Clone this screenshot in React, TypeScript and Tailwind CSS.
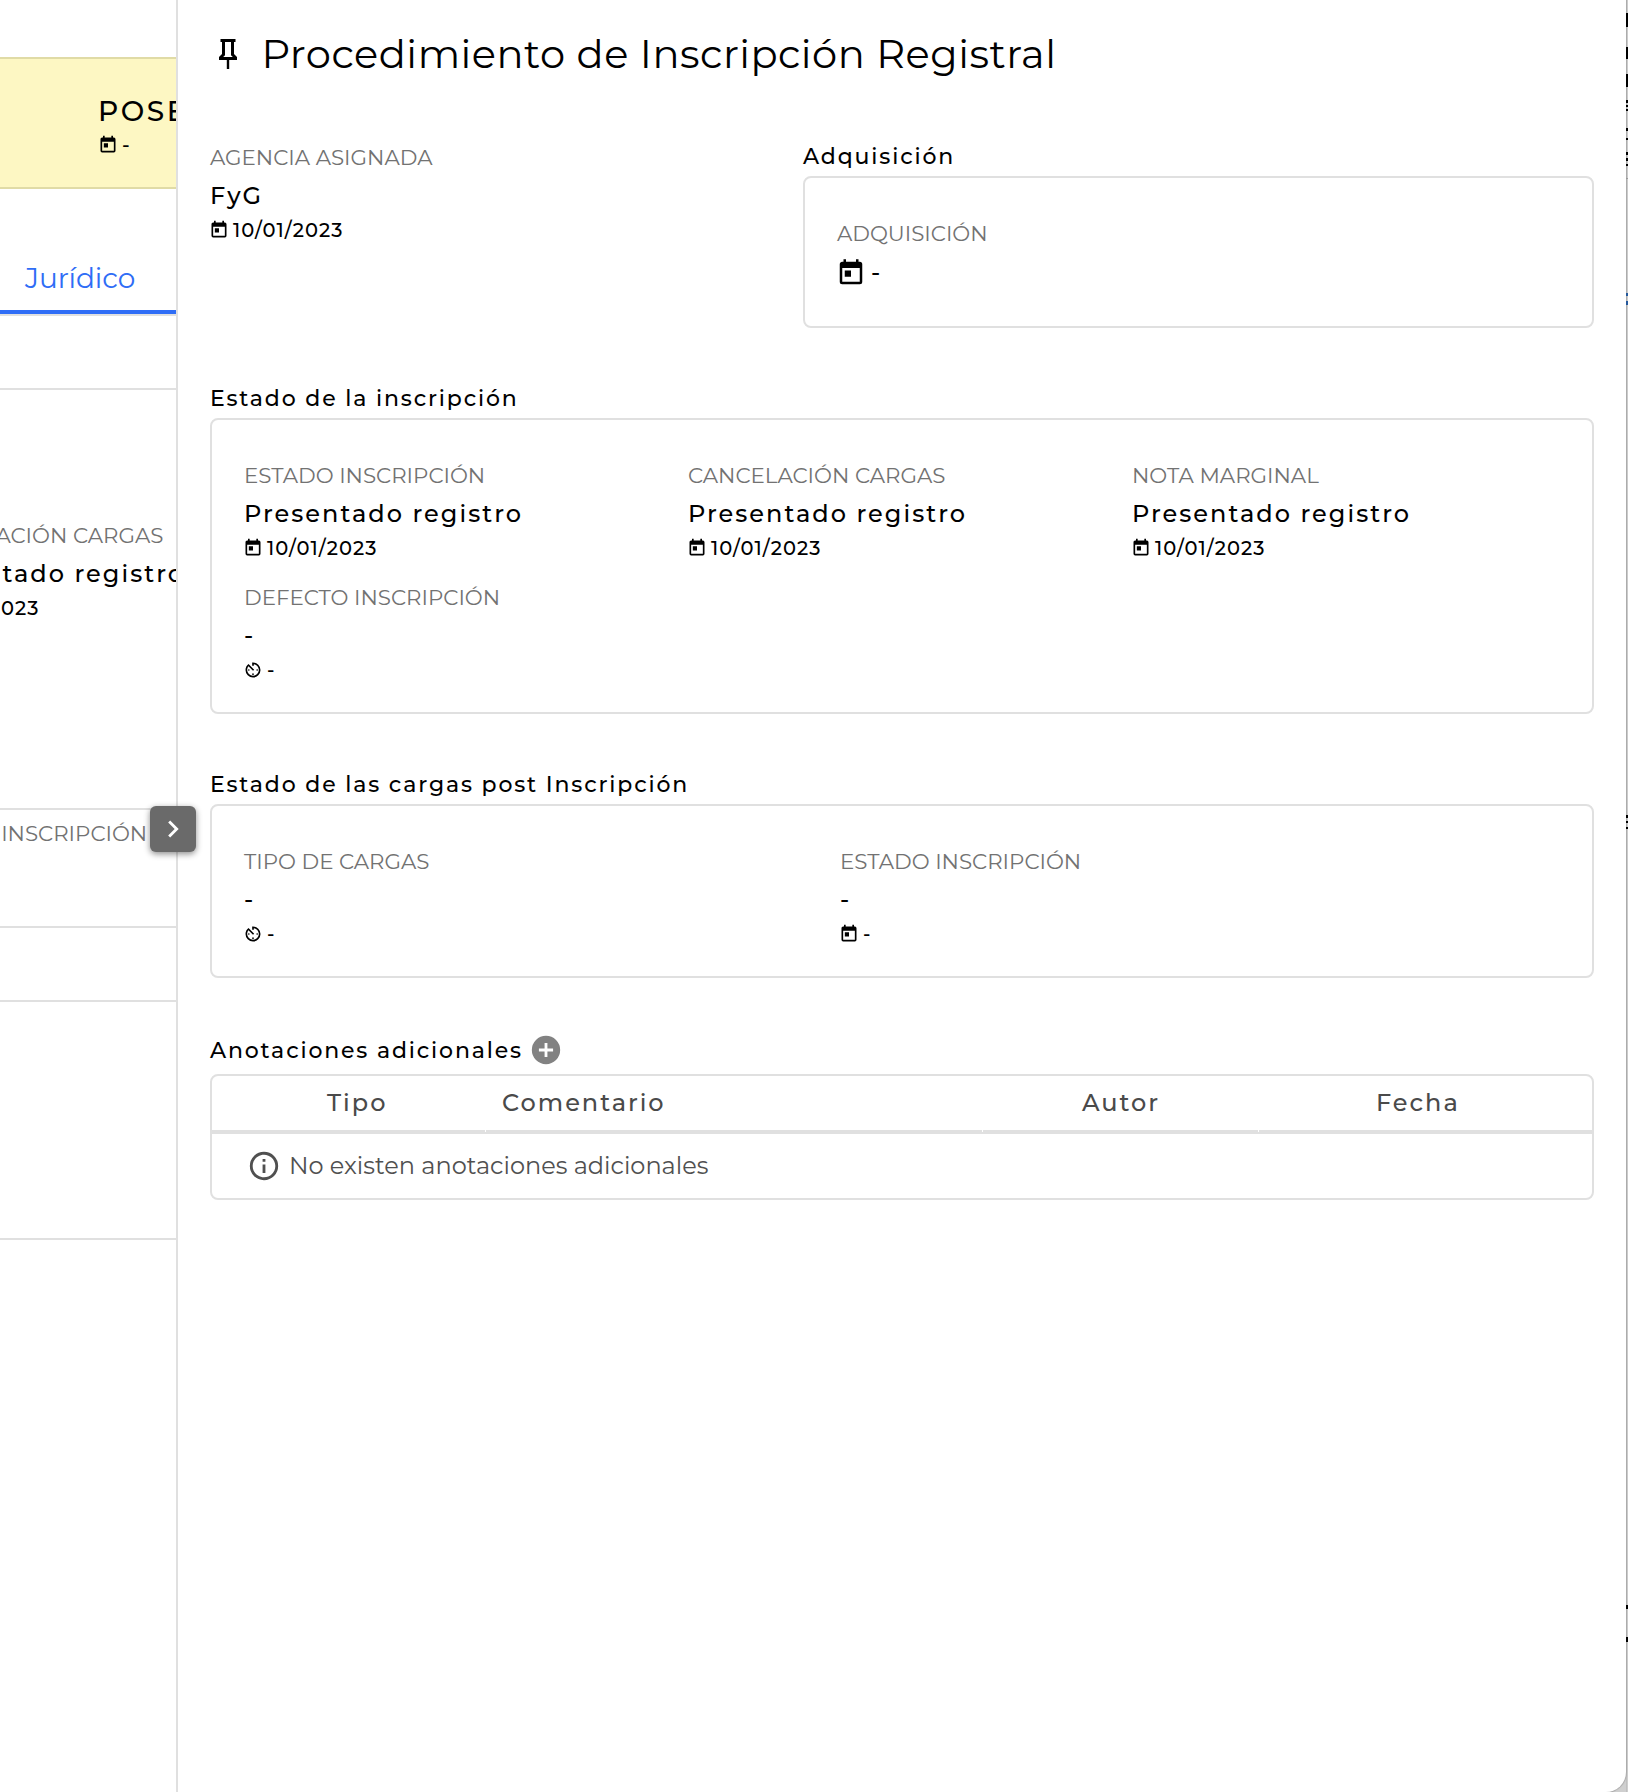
import type { ReactNode } from "react";

const ICONS = {
  calendar:
    "M7,10H12V15H7M19,19H5V8H19M19,3H18V1H16V3H8V1H6V3H5C3.89,3 3,3.9 3,5V19A2,2 0 0,0 5,21H19A2,2 0 0,0 21,19V5A2,2 0 0,0 19,3Z",
  timer:
    "M11,17A1,1 0 0,0 12,18A1,1 0 0,0 13,17A1,1 0 0,0 12,16A1,1 0 0,0 11,17M11,3V7H13V5.08C16.39,5.57 19,8.47 19,12A7,7 0 0,1 12,19A7,7 0 0,1 5,12C5,10.32 5.59,8.78 6.58,7.58L12,13L13.41,11.59L6.61,4.79V4.81C4.42,6.45 3,9.05 3,12A9,9 0 0,0 12,21A9,9 0 0,0 21,12A9,9 0 0,0 12,3M18,12A1,1 0 0,0 17,11A1,1 0 0,0 16,12A1,1 0 0,0 17,13A1,1 0 0,0 18,12M6,12A1,1 0 0,0 7,13A1,1 0 0,0 8,12A1,1 0 0,0 7,11A1,1 0 0,0 6,12Z",
  pin: "M16,12V4H17V2H7V4H8V12L6,14V16H11.2V22H12.8V16H18V14L16,12M8.8,14L10,12.8V4H14V12.8L15.2,14H8.8Z",
  plus: "M17,13H13V17H11V13H7V11H11V7H13V11H17M12,2A10,10 0 0,0 2,12A10,10 0 0,0 12,22A10,10 0 0,0 22,12A10,10 0 0,0 12,2Z",
  info: "M11,9H13V7H11M12,20C7.59,20 4,16.41 4,12C4,7.59 7.59,4 12,4C16.41,4 20,7.59 20,12C20,16.41 16.41,20 12,20M12,2A10,10 0 0,0 2,12A10,10 0 0,0 12,22A10,10 0 0,0 22,12A10,10 0 0,0 12,2M11,17H13V11H11V17Z",
  chevron: "M8.59,16.58L13.17,12L8.59,7.41L10,6L16,12L10,18L8.59,16.58Z",
};

type IconName = keyof typeof ICONS;

function Icon({ name, className }: { name: IconName; className: string }) {
  return (
    <svg viewBox="0 0 24 24" fill="currentColor" aria-hidden="true" className={`shrink-0 ${className}`}>
      <path d={ICONS[name]} />
    </svg>
  );
}

function Label({ children }: { children: ReactNode }) {
  return <div className="text-[21.35px] leading-8 whitespace-nowrap text-[#727272]">{children}</div>;
}

type FieldProps = {
  label: string;
  value: string;
  date: string;
  icon?: IconName;
  className?: string;
};

function Field({ label, value, date, icon = "calendar", className = "" }: FieldProps) {
  return (
    <div className={className}>
      <Label>{label}</Label>
      <div className="mt-[5px] text-2xl leading-9 font-medium tracking-[0.085em] whitespace-nowrap text-black">
        {value}
      </div>
      <div className="mt-1 -ml-px flex h-6 items-center gap-1 text-[19.5px] leading-6 font-medium tracking-[1.05px]">
        <Icon name={icon} className="size-5" />
        <span>{date}</span>
      </div>
    </div>
  );
}

function Heading({ children }: { children: ReactNode }) {
  return (
    <h2 className="-mb-[2px] text-[22px] leading-[34px] font-medium tracking-[1.85px] whitespace-nowrap">
      {children}
    </h2>
  );
}

function Background() {
  return (
    <aside className="flex w-[178px] shrink-0 flex-col overflow-hidden border-r-2 border-[#e0e0e0] whitespace-nowrap">
      <div className="h-[57px] shrink-0" />
      <div className="h-[132px] shrink-0 border-y-2 border-[#e0dba6] bg-[#fdf7c3] pt-[34px] pl-[98px]">
        <div className="text-[28px] leading-9 font-medium tracking-[0.0893em]">POSESIÓN</div>
        <div className="mt-1 flex h-6 items-center gap-1 text-xl font-medium">
          <Icon name="calendar" className="size-5" />
          <span>-</span>
        </div>
      </div>
      <div className="h-[125px] shrink-0 border-b-4 border-[#2f6df6] pt-[71px] pl-[25px] text-[28px] leading-9 tracking-[-0.1px] text-[#2f6df6]">
        Jurídico
      </div>
      <div className="h-[76px] shrink-0 border-y-2 border-[#e0e0e0]" />
      <div className="h-[420px] shrink-0 border-b-2 border-[#e0e0e0] pt-[129px]">
        <Field className="-ml-[94px]" label="CANCELACIÓN CARGAS" value="Presentado registro" date="10/01/2023" />
      </div>
      <div className="h-[118px] shrink-0 border-b-2 border-[#e0e0e0] pt-[7px]">
        <div className="-ml-[94px]">
          <Label>ESTADO INSCRIPCIÓN</Label>
        </div>
      </div>
      <div className="h-[74px] shrink-0 border-b-2 border-[#e0e0e0]" />
      <div className="h-[238px] shrink-0 border-b-2 border-[#e0e0e0]" />
    </aside>
  );
}

const card = "rounded-lg border-2 border-[#e0e0e0]";

function Annotations() {
  const head = "flex h-[56px] items-center border-b-2 border-[#e0e0e0]";
  return (
    <div className={`mt-2 overflow-hidden text-[#4a4a4a] ${card}`}>
      <div className="grid grid-cols-[273px_496px_275px_1fr] gap-px text-2xl font-medium tracking-[0.083em]">
        <div className={`pl-[115px] ${head}`}>Tipo</div>
        <div className={`pl-4 ${head}`}>Comentario</div>
        <div className={`pl-[99px] ${head}`}>Autor</div>
        <div className={`pl-[117px] ${head}`}>Fecha</div>
      </div>
      <div className="flex h-[66px] items-center gap-2 border-t-2 border-[#e0e0e0] pl-[35px] text-2xl text-[#505050]">
        <Icon name="info" className="size-[34px]" />
        <span>No existen anotaciones adicionales</span>
      </div>
    </div>
  );
}

/** Marks of the window behind, visible past the panel's right edge. */
const MARKS = [
  { key: "a", className: "mt-[13px] h-[14px] bg-black" },
  { key: "b", className: "mt-[20px] h-[12px] bg-black" },
  { key: "c", className: "mt-[15px] h-[13px] bg-black" },
  { key: "d", className: "mt-[13px] h-[3px] bg-black" },
  { key: "e", className: "mt-[2px] h-[2px] bg-black" },
  { key: "f", className: "mt-[2px] h-[2px] bg-black" },
  { key: "g", className: "mt-[17px] h-[3px] bg-black" },
  { key: "h", className: "mt-[7px] h-[2px] bg-black" },
  { key: "i", className: "mt-[12px] h-[3px] bg-black" },
  { key: "j", className: "mt-[3px] h-[3px] bg-black" },
  { key: "k", className: "mt-[3px] h-[2px] bg-black" },
  { key: "l", className: "mt-[12px] h-px bg-[#999999]" },
  { key: "m", className: "mt-[114px] h-[3px] bg-[#24589c]" },
  { key: "n", className: "mt-[5px] h-[4px] bg-[#24589c]" },
  { key: "o", className: "mt-[510px] h-[3px] bg-black" },
  { key: "p", className: "mt-[3px] h-[2px] bg-black" },
  { key: "q", className: "mt-[4px] h-[2px] bg-black" },
  { key: "r", className: "mt-[776px] h-[4px] bg-black" },
  { key: "s", className: "mt-[28px] h-[5px] bg-black" },
];

export default function App() {
  return (
    <div className="relative flex h-[1792px] w-[1628px] overflow-hidden bg-[#cfcfcf] font-['Montserrat','Inter',sans-serif] text-black">
      <div className="flex w-[1626px] shrink-0 rounded-br-[20px] bg-white shadow-[0_0_1px_1px_rgba(0,0,0,0.18)]">
        <Background />
        <main className="w-[1448px] pt-[30px] pr-8 pl-8">
          <h1 className="flex h-12 items-center gap-[15.5px] text-[40px] leading-[48px] tracking-[0.5px] whitespace-nowrap">
            <Icon name="pin" className="size-9" />
            <span>Procedimiento de Inscripción Registral</span>
          </h1>

          <div className="mt-[62px] grid grid-cols-[593px_1fr]">
            <Field className="pt-px" label="AGENCIA ASIGNADA" value="FyG" date="10/01/2023" />
            <section>
              <Heading>Adquisición</Heading>
              <div className={`mt-1 h-[152px] pt-[39px] pl-8 ${card}`}>
                <Label>ADQUISICIÓN</Label>
                <div className="mt-[9px] -ml-px flex h-[30px] items-center gap-[5px] text-2xl font-medium">
                  <Icon name="calendar" className="size-[30px]" />
                  <span>-</span>
                </div>
              </div>
            </section>
          </div>

          <section className="mt-[54px]">
            <Heading>Estado de la inscripción</Heading>
            <div className={`mt-1 grid h-[296px] grid-cols-[444px_444px_444px] content-start gap-y-[21px] pt-[39px] pl-8 ${card}`}>
              <Field label="ESTADO INSCRIPCIÓN" value="Presentado registro" date="10/01/2023" />
              <Field label="CANCELACIÓN CARGAS" value="Presentado registro" date="10/01/2023" />
              <Field label="NOTA MARGINAL" value="Presentado registro" date="10/01/2023" />
              <Field label="DEFECTO INSCRIPCIÓN" value="-" date="-" icon="timer" />
            </div>
          </section>

          <section className="mt-[54px]">
            <Heading>Estado de las cargas post Inscripción</Heading>
            <div className={`mt-1 grid h-[174px] grid-cols-[596px_1fr] content-start pt-[39px] pl-8 ${card}`}>
              <Field label="TIPO DE CARGAS" value="-" date="-" icon="timer" />
              <Field label="ESTADO INSCRIPCIÓN" value="-" date="-" />
            </div>
          </section>

          <section className="mt-[56px]">
            <div className="flex h-8 items-center gap-[6px]">
              <Heading>Anotaciones adicionales</Heading>
              <button type="button" aria-label="Añadir" className="text-[#828282]">
                <Icon name="plus" className="size-[34px]" />
              </button>
            </div>
            <Annotations />
          </section>
        </main>
      </div>

      <div className="flex w-[2px] shrink-0 flex-col border-l border-[#a9a9a9]/40">
        {MARKS.map((m) => (
          <div key={m.key} className={`-ml-px w-[2px] shrink-0 ${m.className}`} />
        ))}
      </div>

      <button
        type="button"
        aria-label="Cerrar"
        className="absolute top-[806px] left-[150px] flex h-[46px] w-[46px] items-center justify-center rounded-md bg-[#6a6a6a] text-white shadow-[0_2px_6px_rgba(0,0,0,0.45)]"
      >
        <Icon name="chevron" className="size-[34px]" />
      </button>
    </div>
  );
}
